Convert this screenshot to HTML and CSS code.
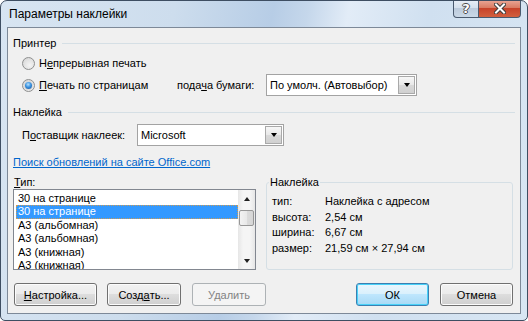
FILE: index.html
```html
<!DOCTYPE html>
<html lang="ru">
<head>
<meta charset="utf-8">
<title>Параметры наклейки</title>
<link rel="stylesheet" href="styles.css">
</head>
<body>
<div class="window">
  <div class="titlebar">
    <span class="title">Параметры наклейки</span>
    <div class="caption-buttons">
      <span class="cbtn help">?</span>
      <span class="cbtn close">
        <svg width="12" height="11" viewBox="0 0 12 11">
          <path d="M2 1.5 L10 9.5 M10 1.5 L2 9.5" stroke="#3b3b3b" stroke-width="4" stroke-linecap="square" fill="none"/>
          <path d="M2 1.5 L10 9.5 M10 1.5 L2 9.5" stroke="#ffffff" stroke-width="2" stroke-linecap="square" fill="none"/>
        </svg>
      </span>
    </div>
  </div>
  <div class="client">
    <div class="section-head first"><span>Принтер</span><i class="rule"></i></div>
    <div class="row radio-row">
      <span class="radio"></span>
      <span class="radio-text">Н<u>е</u>прерывная печать</span>
    </div>
    <div class="row radio-row">
      <span class="radio checked"></span>
      <span class="radio-text wide"><u>П</u>ечать по страницам</span>
      <span class="paper-label">пода<u>ч</u>а бумаги:</span>
      <div class="combo paper"><span class="combo-text">По умолч. (Автовыбор)</span><span class="combo-btn"><i class="tri-down"></i></span></div>
    </div>
    <div class="section-head second"><span>Наклейка</span><i class="rule"></i></div>
    <div class="row vendor-row">
      <span class="vendor-label">П<u>о</u>ставщик наклеек:</span>
      <div class="combo vendor"><span class="combo-text">Microsoft</span><span class="combo-btn"><i class="tri-down"></i></span></div>
    </div>
    <div class="link-row"><a class="link" href="#">Поиск обновлений на сайте Office.com</a></div>
    <div class="columns">
      <div class="type-col">
        <div class="type-label"><u>Т</u>ип:</div>
        <div class="listbox">
          <ul class="items">
            <li>30 на странице</li>
            <li class="selected">30 на странице</li>
            <li>А3 (альбомная)</li>
            <li>А3 (альбомная)</li>
            <li>А3 (книжная)</li>
            <li>А3 (книжная)</li>
          </ul>
          <div class="scrollbar">
            <span class="sb-btn"><i class="sb-up"></i></span>
            <span class="sb-track"><span class="sb-thumb"></span></span>
            <span class="sb-btn"><i class="sb-down"></i></span>
          </div>
        </div>
      </div>
      <fieldset class="info">
        <legend>Наклейка</legend>
        <div class="info-grid">
          <span>тип:</span><span>Наклейка с адресом</span>
          <span>высота:</span><span>2,54 см</span>
          <span>ширина:</span><span>6,67 см</span>
          <span>размер:</span><span>21,59 см × 27,94 см</span>
        </div>
      </fieldset>
    </div>
    <div class="buttons">
      <div class="btn-group left">
        <span class="btn setup"><u>Н</u>астройка...</span>
        <span class="btn">Созд<u>а</u>ть...</span>
        <span class="btn disabled">Удалить</span>
      </div>
      <div class="btn-group right">
        <span class="btn default">ОК</span>
        <span class="btn">Отмена</span>
      </div>
    </div>
  </div>
</div>
</body>
</html>
```

FILE: styles.css
```css
html, body {
  margin: 0;
  padding: 0;
  background: #ffffff;
}
body {
  font-family: "Liberation Sans", Arial, sans-serif;
  font-size: 11px;
  color: #000;
  white-space: nowrap;
}
u { text-decoration: underline; text-underline-offset: 1px; }

.window {
  width: 528px;
  height: 321px;
  box-sizing: border-box;
  border: 1px solid #3e4e62;
  border-radius: 7px 7px 5px 5px;
  background:
    linear-gradient(100deg, #d8e5f2 0%, #cddded 30%, #b7cde6 47%, #c5d7eb 53%, #e2ecf7 60%, #d0e0f0 74%, #d8e6f3 100%);
  display: flex;
  flex-direction: column;
  overflow: hidden;
}

.titlebar {
  height: 26px;
  flex: 0 0 26px;
  display: flex;
  justify-content: space-between;
  align-items: center;
  padding-left: 8px;
}
.title {
  font-size: 12px;
  color: #000;
}
.caption-buttons {
  align-self: flex-start;
  margin-top: -1px;
  margin-right: 6px;
  display: flex;
  height: 18px;
}
.cbtn {
  box-sizing: border-box;
  height: 18px;
  display: flex;
  align-items: center;
  justify-content: center;
  border: 1px solid #4a5a6e;
  border-top: none;
}
.help {
  width: 26px;
  border-radius: 0 0 0 4px;
  background: linear-gradient(#e8eff7, #d6e1ed 45%, #bccbdc 50%, #cad8e7 100%);
  color: #fff;
  font-weight: bold;
  font-size: 13px;
  font-family: "DejaVu Sans", sans-serif;
  text-shadow: 1px 0 #4b4b4b, -1px 0 #4b4b4b, 0 1px #4b4b4b, 0 -1px #4b4b4b;
  line-height: 1;
}
.close {
  width: 42px;
  border-left: none;
  border-radius: 0 0 4px 0;
  background: linear-gradient(#eaa898, #d97c64 45%, #c7432a 50%, #d2603f 100%);
}

.client {
  flex: 1;
  margin: 0 6px 6px 6px;
  border: 1px solid #7d8998;
  background: #f0f0f0;
  padding: 0 5px;
  display: flex;
  flex-direction: column;
}

.section-head {
  height: 18px;
  display: flex;
  align-items: center;
}
.section-head.first { margin-top: 6px; }
.section-head.second { margin-top: 7px; }
.rule {
  flex: 1;
  height: 1px;
  background: #d5dfe5;
  margin-left: 6px;
}

.row {
  height: 22px;
  display: flex;
  align-items: center;
}
.radio-row { padding-left: 9px; }
.radio {
  box-sizing: border-box;
  flex: 0 0 13px;
  width: 13px;
  height: 13px;
  border-radius: 50%;
  border: 1px solid #8e8f8f;
  background: radial-gradient(circle at 60% 65%, #f4f4f4 0%, #e2e2e2 55%, #cfcfcf 100%);
  margin-right: 4px;
  display: flex;
  align-items: center;
  justify-content: center;
}
.radio.checked::after {
  content: "";
  width: 7px;
  height: 7px;
  border-radius: 50%;
  background: radial-gradient(circle at 45% 35%, #b7e2ff 0%, #3b93e0 45%, #1a4f93 100%);
  box-shadow: 0 0 0 1px #d8d8d8;
}
.radio-text.wide { flex: 0 0 138px; }
.paper-label { flex: 0 0 89px; }

.combo {
  box-sizing: border-box;
  height: 22px;
  border: 1px solid #a3a3a3;
  background: #fff;
  display: flex;
  align-items: stretch;
}
.combo.paper { flex: 0 0 151px; }
.combo.vendor { flex: 0 0 147px; }
.combo-text {
  flex: 1;
  display: flex;
  align-items: center;
  padding-left: 3px;
  overflow: hidden;
}
.combo-btn {
  box-sizing: border-box;
  flex: 0 0 17px;
  margin: 1px;
  border: 1px solid #a9a9a9;
  background: linear-gradient(#f7f7f7, #e8e8e8 50%, #d9d9d9 51%, #d0d0d0);
  display: flex;
  align-items: center;
  justify-content: center;
}
.tri-down {
  width: 0;
  height: 0;
  border-left: 3.5px solid transparent;
  border-right: 3.5px solid transparent;
  border-top: 4px solid #000;
}

.vendor-row { margin-top: 3px; padding-left: 9px; }
.vendor-label { flex: 0 0 115px; }

.link-row {
  margin-top: 8px;
  height: 16px;
  display: flex;
  align-items: center;
}
.link {
  color: #0066cc;
  text-decoration: underline;
  text-underline-offset: 1px;
}

.columns {
  margin-top: 5px;
  display: grid;
  grid-template-columns: 243px 247px;
  column-gap: 10px;
}
.type-label {
  height: 14px;
  line-height: 14px;
  padding-left: 1px;
}
.listbox {
  box-sizing: border-box;
  height: 81px;
  border: 1px solid #828790;
  background: #fff;
  display: flex;
}
.items {
  list-style: none;
  margin: 0;
  padding: 2px 0 0 0;
  flex: 1;
  overflow: hidden;
}
.items li {
  height: 13.4px;
  line-height: 13.4px;
  margin: 0 0 0 2px;
  padding-left: 2px;
  box-sizing: border-box;
}
.items li.selected {
  background: #3399ff;
  color: #fff;
  outline: 1px dotted #cc9b55;
  outline-offset: -1px;
}
.scrollbar {
  flex: 0 0 17px;
  display: flex;
  flex-direction: column;
  background: linear-gradient(90deg, #e6e6e6, #f5f5f5 30%, #f5f5f5 70%, #e6e6e6);
}
.sb-btn {
  height: 17px;
  display: flex;
  align-items: center;
  justify-content: center;
}
.sb-up {
  width: 0;
  height: 0;
  border-left: 3.5px solid transparent;
  border-right: 3.5px solid transparent;
  border-bottom: 4px solid #202020;
}
.sb-down {
  width: 0;
  height: 0;
  border-left: 3.5px solid transparent;
  border-right: 3.5px solid transparent;
  border-top: 4px solid #202020;
}
.sb-track {
  flex: 1;
  padding-top: 3px;
  display: flex;
  flex-direction: column;
  align-items: center;
}
.sb-thumb {
  box-sizing: border-box;
  width: 15px;
  height: 16px;
  border: 1px solid #979797;
  border-radius: 2px;
  background: linear-gradient(90deg, #f3f3f3, #e9e9e9 50%, #dcdcdc 51%, #d6d6d6);
}

.info {
  box-sizing: border-box;
  margin: 0;
  height: 95px;
  padding: 0 0 0 5px;
  border: 1px solid #d5dfe5;
  border-radius: 3px;
  min-width: 0;
}
.info legend {
  padding: 0 1px;
  margin-left: -3px;
  line-height: 14px;
}
.info-grid {
  padding-top: 5px;
  display: grid;
  grid-template-columns: 53px auto;
  line-height: 15.67px;
}

.buttons {
  margin-top: 13px;
  display: flex;
  justify-content: space-between;
}
.btn-group {
  display: flex;
  gap: 11px;
}
.btn-group.left { padding-left: 1px; }
.btn-group.right { margin-right: 2px; }
.btn {
  box-sizing: border-box;
  width: 74px;
  height: 23px;
  border: 1px solid #707070;
  border-radius: 3px;
  background: linear-gradient(#f2f2f2, #ebebeb 49%, #dddddd 50%, #cfcfcf);
  box-shadow: inset 0 0 0 1px #fcfcfc;
  display: flex;
  align-items: center;
  justify-content: center;
}
.btn.setup { width: 83px; margin-right: -1px; }
.btn.disabled {
  border-color: #adb2b5;
  background: #f4f4f4;
  color: #838383;
  box-shadow: none;
}
.btn-group.right .btn { width: 73px; }
.btn.default {
  border-color: #3c7fb1;
  box-shadow: inset 0 0 0 1px #48d1f8;
  background: linear-gradient(#eaf6fd, #d9f0fc 49%, #bee6fd 50%, #a7d9f5);
}
```
